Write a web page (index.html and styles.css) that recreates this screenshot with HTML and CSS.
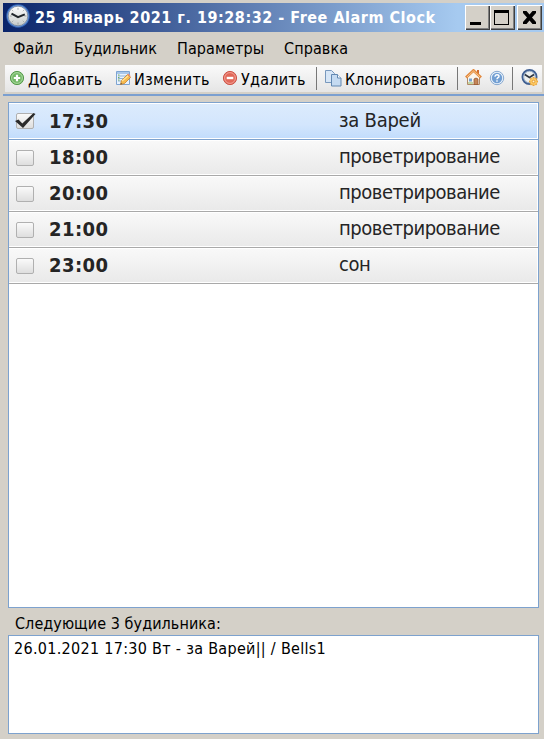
FILE: index.html
```html
<!DOCTYPE html>
<html lang="ru">
<head>
<meta charset="utf-8">
<title>Free Alarm Clock</title>
<link rel="stylesheet" href="styles.css">
</head>
<body>
<div class="window">
  <header class="titlebar">
    <svg class="app-icon" width="24" height="26" viewBox="0 0 24 26">
      <defs><linearGradient id="face" x2="0" y2="1"><stop stop-color="#fff"/><stop offset="1" stop-color="#c6cbc9"/></linearGradient></defs>
      <circle cx="12" cy="12" r="11.700" fill="#3467b8"/><circle cx="12" cy="12" r="10.700" fill="#7ba2dc"/>
      <circle cx="12" cy="12" r="9.800" fill="url(#face)" stroke="#687485" stroke-width=".6"/>
      <path d="M12 3.800v2M12 18.500v2M3.800 12h2M18.500 12h2M6.200 6.200l1 1M17.800 6.200l-1 1M6.200 17.800l1-1M17.800 17.800l-1-1" stroke="#929894" stroke-width=".8"/>
      <path d="M5.500 9.600L12 13.200L18.800 10.300" fill="none" stroke="#20262a" stroke-width="2"/>
    </svg>
    <h1 class="title">25 Январь 2021 г. 19:28:32 - Free Alarm Clock</h1>
    <div class="controls">
      <button class="control" aria-label="Свернуть"><svg width="25" height="25"><path d="M5 17h11v3H5z"/></svg></button>
      <button class="control" aria-label="Развернуть"><svg width="25" height="25"><path d="M4 5h15v15H4zM5 8v11h13V8z" fill-rule="evenodd"/></svg></button>
      <button class="control close" aria-label="Закрыть"><svg width="25" height="25"><path d="M6 6h3.500l3 3.500 3-3.500H19v2l-4 4.500 4 4.500v2h-3.500l-3-3.500-3 3.500H6v-2l4-4.500-4-4.500z"/></svg></button>
    </div>
  </header>
  <nav class="menu"><span class="m-file">Файл</span><span class="m-alarm">Будильник</span><span class="m-options">Параметры</span><span class="m-help">Справка</span></nav>
  <div class="toolbar-wrap">
    <div class="toolbar">
      <div class="tool add">
        <svg width="16" height="16" viewBox="0 0 16 16"><circle cx="8" cy="8" r="6.600" fill="#74b968" stroke="#559a4b"/><circle cx="8" cy="8" r="5.400" fill="none" stroke="#acd9a0"/><path d="M8 4.800v6.400M4.800 8h6.400" stroke="#fff" stroke-width="2.200"/></svg><span>Добавить</span>
      </div>
      <div class="tool edit">
        <svg width="16" height="16" viewBox="0 0 16 16"><path d="M1.500 1.500h13v13h-13z" fill="#e9f2fc" stroke="#7da4d2"/><path d="M2 3h12" stroke="#a9c7ea" stroke-width="2"/><path d="M3 6h10M3 8.500h9M3 11h6" stroke="#8fb1d4"/><path d="M3 5h1.500M3 7.500h1.500M3 10h1.500" stroke="#76b25e"/><path d="M5.500 14.500l1-4 6-6 3 3-6 6z" fill="#f6bb4f" stroke="#c88029" stroke-width=".8"/><path d="M7 11l6-5" stroke="#ffe49b" stroke-width="1.300"/><path d="M5.500 14.500l.4-1.700 1.300 1.300z" fill="#5b5149"/><path d="M12.500 4.500l1-1 2 2.500v1.500z" fill="#ef8f76"/></svg><span>Изменить</span>
      </div>
      <div class="tool delete">
        <svg width="16" height="16" viewBox="0 0 16 16"><circle cx="8" cy="8" r="6.600" fill="#e16859" stroke="#cd5549"/><circle cx="8" cy="8" r="5.400" fill="none" stroke="#f2a196"/><path d="M4.700 8h6.600" stroke="#fff" stroke-width="2.400"/></svg><span>Удалить</span>
      </div>
      <i class="separator"></i>
      <div class="tool clone">
        <svg width="17" height="17" viewBox="0 0 17 17"><path d="M.5.500h6l3 3v9h-9z" fill="#d7e6f6" stroke="#7898bd"/><path d="M6.500 4.500h6l3.500 3.500v8H6.500z" fill="#c4daf1" stroke="#6288b1"/><path d="M12.500 4.500V8H16" fill="#fff" stroke="#6288b1"/></svg><span>Клонировать</span>
      </div>
      <i class="separator"></i>
      <svg class="home" width="17" height="16" viewBox="0 0 17 16"><path d="M12 1h2v4h-2z" fill="#d06a2c"/><path d="M2.500 8v7.500h12V8L8.500 2z" fill="#fbf5ec" stroke="#b18a67"/><path d="M1 8.500L8.500 1.500 16 8.500" fill="none" stroke="#e28a40" stroke-width="2.800"/><path d="M2 8L8.500 2 15 8" fill="none" stroke="#fbc98c" stroke-width="1"/><path d="M4 9.500h3v3H4z" fill="#76a5d5"/><path d="M9 15.500V10q2-2 4 0v5.500z" fill="#c38658" stroke="#93512b" stroke-width=".7"/><path d="M3 14h5" stroke="#8ab75c"/></svg>
      <svg class="help" width="16" height="16" viewBox="0 0 16 16"><circle cx="8" cy="8" r="6.700" fill="#eaf2fa" stroke="#86a8d0"/><circle cx="8" cy="8" r="5.200" fill="#729fd3"/><path d="M6 6.700c0-2.800 4-2.400 4-.3 0 1.300-2 1.300-2 2.900M8 10.300v1.500" fill="none" stroke="#fff" stroke-width="1.400"/></svg>
      <i class="separator"></i>
      <svg class="settings" width="18" height="18" viewBox="0 0 18 18"><circle cx="8.500" cy="8" r="7" fill="#edf0ef" stroke="#3e5e91" stroke-width="2"/><circle cx="8.500" cy="8" r="5.800" fill="none" stroke="#9eb3cc"/><path d="M3.800 5.500L8.500 8.500l4.500-3" fill="none" stroke="#2f3742" stroke-width="1.700"/><path d="M12.500 8v9M8 12.500h9M9.300 9.300l6.400 6.400M15.700 9.300l-6.400 6.400" stroke="#eba53b" stroke-width="2"/><circle cx="12.500" cy="12.500" r="3.200" fill="#ffc95e"/><circle cx="12.500" cy="12.500" r="1.300" fill="#fff2ca" stroke="#d88924" stroke-width=".7"/></svg>
    </div>
  </div>
  <main class="alarms">
    <div class="alarm selected"><span class="check"><svg width="22" height="18" viewBox="0 0 22 18"><path d="M0 9l3.500-1.500 3.800 4L18.500 1l2 1L8 16z" fill="#2b2b2b"/></svg></span><b class="time">17:30</b><span class="name varey">за Варей</span></div>
    <div class="alarm"><span class="check"></span><b class="time">18:00</b><span class="name">проветрирование</span></div>
    <div class="alarm"><span class="check"></span><b class="time">20:00</b><span class="name">проветрирование</span></div>
    <div class="alarm"><span class="check"></span><b class="time">21:00</b><span class="name">проветрирование</span></div>
    <div class="alarm"><span class="check"></span><b class="time">23:00</b><span class="name">сон</span></div>
  </main>
  <div class="next-label"><span>Следующие 3 будильника:</span></div>
  <section class="next"><span>26.01.2021 17:30 Вт - за Варей|| / Bells1</span></section>
</div>
</body>
</html>
```
FILE: styles.css
```css
* { box-sizing: border-box; }
body { margin: 0; background: #d4d0c8; color: #000; font: 16px/20px "DejaVu Sans Condensed", "DejaVu Sans", sans-serif; font-stretch: condensed; }
svg { display: block; flex: none; }
.window { width: 544px; height: 739px; padding-top: 3px; display: flex; flex-direction: column; overflow: hidden; white-space: nowrap; }
.titlebar { height: 29px; flex: none; margin-left: 3px; padding: 2px 2px 2px 3px; display: flex; background: linear-gradient(90deg, #0a246a, #a6caf0 84%); }
.app-icon { margin-top: -1px; }
.title { flex: 1; margin: 0 0 0 5px; color: #fff; font-size: 16px; line-height: 26px; letter-spacing: .53px; }
.controls { display: flex; }
.control { width: 25px; height: 25px; padding: 0; border: 0; background: #d4d0c8; box-shadow: inset 1px 1px #fff, inset -1px -1px #404040, inset -2px -2px #808080; }
.close { margin-left: 2px; }
.menu { height: 33px; flex: none; padding-left: 13px; display: flex; line-height: 33px; }
.m-file { width: 61px; }
.m-alarm { width: 103px; }
.m-options { width: 107px; }
.m-file, .m-options { letter-spacing: .1px; }
.m-help { letter-spacing: .1px; }
.toolbar-wrap { height: 31px; flex: none; margin-left: 3px; padding: 0 2px 2px; border-bottom: 2px solid #7b9fd0; }
.toolbar { height: 27px; padding-left: 4px; display: flex; align-items: center; background: linear-gradient(#fafafa, #e5e5e5); }
.tool { display: flex; align-items: center; height: 27px; flex: none; }
.tool svg { margin-top: -1px; }
.tool span { line-height: 27px; padding-top: 1px; margin-left: 3px; letter-spacing: .25px; }
.add { width: 106px; }
.edit { width: 107px; }
.delete { width: 94px; }
.clone { width: 132px; margin-left: 8px; }
.tool.clone span { margin-left: 3px; letter-spacing: .15px; }
.separator { width: 1px; height: 23px; flex: none; background: #777; }
.home { margin: -3px 0 0 7px; }
.help { margin: -2px 7px 0; }
.settings { margin: -1px 0 0 8px; }
.alarms { height: 506px; flex: none; margin: 6px 5px 0 8px; border: 1px solid #7da2ce; background: #fff; }
.alarm { height: 36px; padding-left: 7px; display: grid; grid-template-columns: 33px 290px 1fr; background: linear-gradient(#f9f9f9, #e9e9e9); border-bottom: 1px solid #a9a9a9; box-shadow: inset 0 1px #fff, inset -1px -1px #fff; color: #252525; }
.selected { height: 37px; padding-top: 1px; background: linear-gradient(#dcebfc, #d3e6fd 60%, #c1dcfc); border-color: #7da2ce; }
.check { position: relative; width: 18px; height: 16px; margin-top: 10px; border: 1px solid #b0b0b0; border-radius: 2px; background: linear-gradient(#fafafa, #dedede); }
.selected .check { margin-top: 9px; }
.check svg { position: absolute; left: -2px; top: -2px; }
.time { font-size: 20px; line-height: 35px; letter-spacing: .45px; }
.name { font-size: 20px; line-height: 33px; letter-spacing: -.48px; }
.varey { line-height: 32px; letter-spacing: -.25px; }
.next-label { height: 27px; flex: none; padding-left: 15px; line-height: 32px; letter-spacing: .07px; }
.next { height: 99px; flex: none; margin: 0 5px 0 8px; padding: 3px 5px; border: 1px solid #7da2ce; background: #fff; letter-spacing: .3px; }
```
